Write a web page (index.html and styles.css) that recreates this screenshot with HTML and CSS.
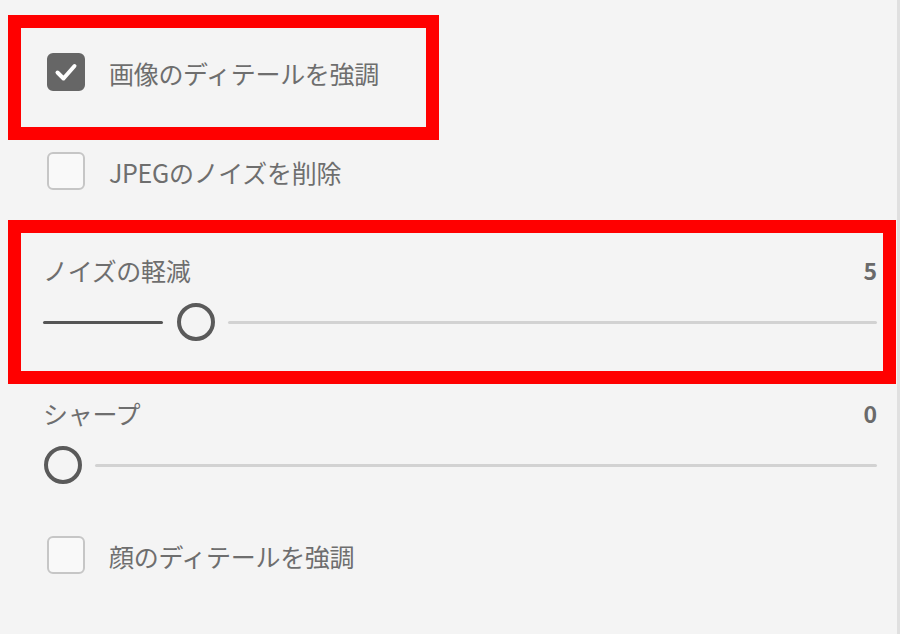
FILE: index.html
```html
<!DOCTYPE html>
<html lang="ja">
<head>
<meta charset="utf-8">
<title>設定</title>
<link rel="stylesheet" href="styles.css">
</head>
<body>
<div class="panel">
  <div class="check-row first highlight-small">
    <span class="box checked">
      <svg viewBox="0 0 38 38" width="38" height="38"><path d="M10.5 19.5 L16.5 25.5 L27.5 13" fill="none" stroke="#fff" stroke-width="4" stroke-linecap="round" stroke-linejoin="round"/></svg>
    </span>
    <span class="label">画像のディテールを強調</span>
  </div>
  <div class="check-row second">
    <span class="box"></span>
    <span class="label">JPEGのノイズを削除</span>
  </div>
  <div class="slider-group highlight-wide">
    <div class="slider-head">
      <span class="label">ノイズの軽減</span>
      <span class="value">5</span>
    </div>
    <div class="slider">
      <span class="fill fill-noise"></span>
      <span class="thumb"></span>
      <span class="track"></span>
    </div>
  </div>
  <div class="slider-group sharp">
    <div class="slider-head">
      <span class="label">シャープ</span>
      <span class="value">0</span>
    </div>
    <div class="slider">
      <span class="thumb thumb-start"></span>
      <span class="track"></span>
    </div>
  </div>
  <div class="check-row third">
    <span class="box"></span>
    <span class="label">顔のディテールを強調</span>
  </div>
</div>
</body>
</html>
```

FILE: styles.css
```css
* { box-sizing: border-box; }
html, body {
  margin: 0;
  padding: 0;
  background: #f4f4f4;
}
body {
  font-family: "Noto Sans CJK JP", "Noto Sans", sans-serif;
  color: #6e6e6e;
  width: 900px;
  height: 634px;
  overflow: hidden;
}
.panel {
  width: 900px;
  height: 634px;
  padding: 0 14px 0 21px;
  border-right: 3px solid #e0e0e0;
  display: flex;
  flex-direction: column;
  align-items: flex-start;
}
.label {
  font-size: 25px;
  line-height: 30px;
  white-space: nowrap;
  letter-spacing: -0.3px;
}
.check-row {
  display: flex;
  align-items: center;
  gap: 24px;
  padding-left: 26px;
  height: 38px;
}
.check-row .label { margin-top: 2px; }
.check-row.first {
  margin-top: 28px;
  width: 405px;
  height: 99px;
  align-items: flex-start;
  padding-top: 25px;
}
.check-row.first .label { margin-top: 5px; }
.check-row.second { margin-top: 25px; }
.check-row.third { margin-top: 52px; }

.highlight-small,
.highlight-wide {
  outline: 13px solid #ff0000;
}

.box {
  width: 38px;
  height: 38px;
  flex: none;
  border-radius: 6px;
  border: 2px solid #c6c6c6;
  background: #f9f9f9;
  display: flex;
}
.box.checked {
  background: #666666;
  border-color: #666666;
}
.box.checked svg { margin: -2px; }

.slider-group {
  align-self: stretch;
  display: flex;
  flex-direction: column;
  gap: 18px;
  padding: 22px 6px 30px 22px;
}
.highlight-wide { margin-top: 43px; }
.slider-group.sharp {
  margin-top: 27px;
  padding-top: 0;
  padding-bottom: 0;
}
.slider-head {
  display: flex;
  justify-content: space-between;
  align-items: center;
  height: 30px;
}
.value {
  font-size: 23px;
  font-weight: 700;
  color: #6a6a6a;
  line-height: 30px;
}
.slider {
  display: flex;
  align-items: center;
  height: 38px;
}
.fill {
  height: 3px;
  background: #555555;
  border-radius: 2px;
  flex: none;
}
.fill-noise { width: 120px; margin-right: 14px; }
.thumb {
  width: 38px;
  height: 38px;
  flex: none;
  border-radius: 50%;
  border: 4px solid #5a5a5a;
  background: #f4f4f4;
}
.thumb-start { margin-left: 1px; }
.track {
  flex: 1;
  height: 3px;
  margin-left: 13px;
  background: #d2d2d2;
  border-radius: 2px;
}
```
